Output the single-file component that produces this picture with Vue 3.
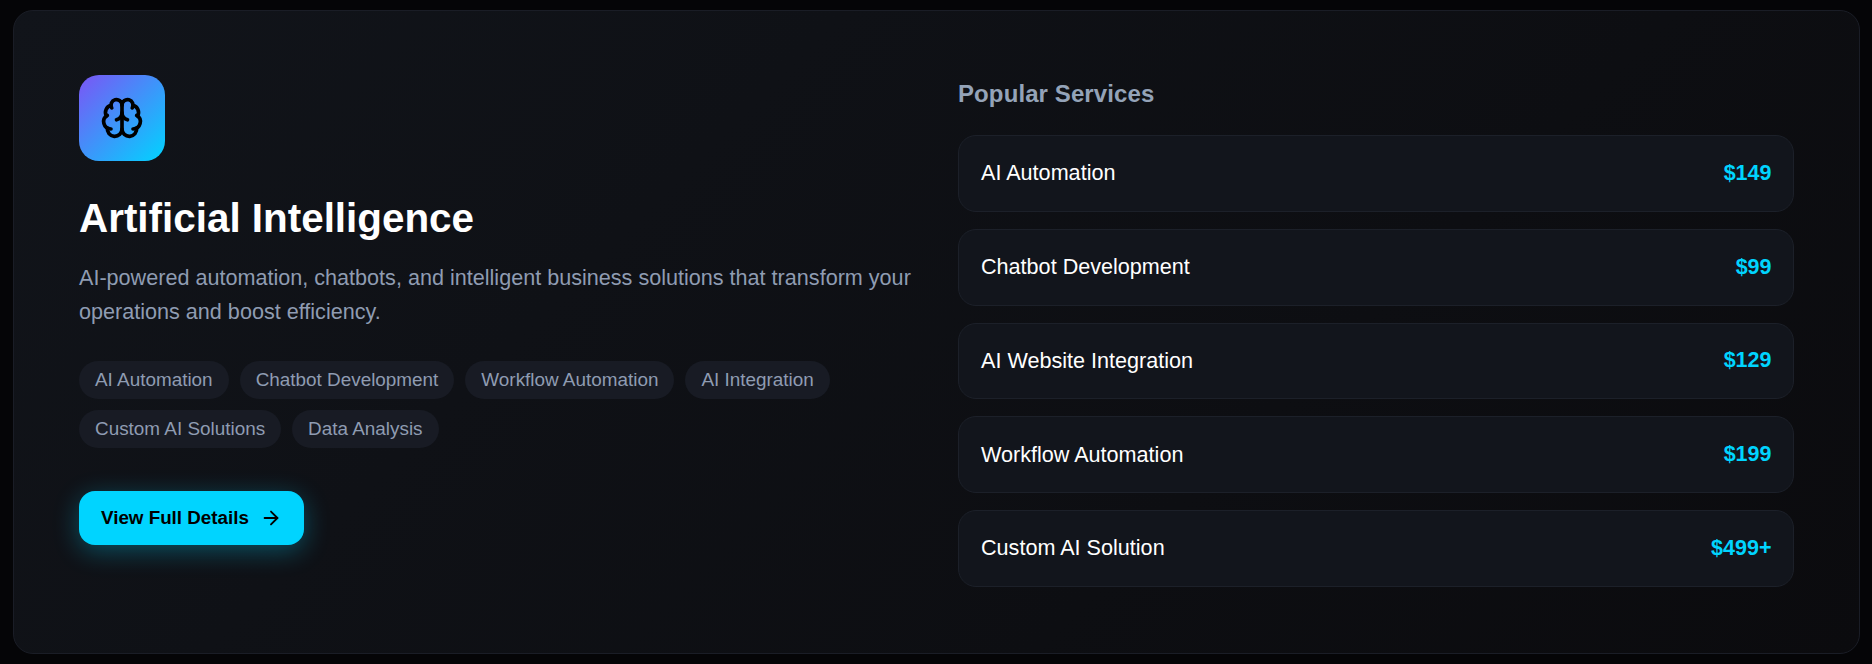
<script setup>
const tags = ['AI Automation', 'Chatbot Development', 'Workflow Automation', 'AI Integration', 'Custom AI Solutions', 'Data Analysis']
const services = [
  { name: 'AI Automation', price: '$149' },
  { name: 'Chatbot Development', price: '$99' },
  { name: 'AI Website Integration', price: '$129' },
  { name: 'Workflow Automation', price: '$199' },
  { name: 'Custom AI Solution', price: '$499+' }
]
</script>

<template>
  <div class="page">
    <section class="card">
      <div class="left">
        <div class="icon">
          <svg width="44" height="44" viewBox="0 0 24 24" fill="none" stroke="#000" stroke-width="2" stroke-linecap="round" stroke-linejoin="round">
            <path d="M12 18V5" />
            <path d="M15 13a4.17 4.17 0 0 1-3-4 4.17 4.17 0 0 1-3 4" />
            <path d="M17.598 6.5A3 3 0 1 0 12 5a3 3 0 1 0-5.598 1.5" />
            <path d="M17.997 5.125a4 4 0 0 1 2.526 5.77" />
            <path d="M18 18a4 4 0 0 0 2-7.464" />
            <path d="M19.967 17.483A4 4 0 1 1 12 18a4 4 0 1 1-7.967-.517" />
            <path d="M6 18a4 4 0 0 1-2-7.464" />
            <path d="M6.003 5.125a4 4 0 0 0-2.526 5.77" />
          </svg>
        </div>
        <h2 class="title">Artificial Intelligence</h2>
        <p class="desc">AI-powered automation, chatbots, and intelligent business solutions that transform your operations and boost efficiency.</p>
        <div class="tags">
          <span v-for="t in tags" :key="t" class="tag">{{ t }}</span>
        </div>
        <button class="cta">
          View Full Details
          <svg width="22" height="22" viewBox="0 0 24 24" fill="none" stroke="#000" stroke-width="2" stroke-linecap="round" stroke-linejoin="round">
            <path d="M5 12h14" />
            <path d="m12 5 7 7-7 7" />
          </svg>
        </button>
      </div>
      <div class="right">
        <h3 class="heading">Popular Services</h3>
        <div class="list">
          <div v-for="s in services" :key="s.name" class="row">
            <span class="name">{{ s.name }}</span>
            <span class="price">{{ s.price }}</span>
          </div>
        </div>
      </div>
    </section>
  </div>
</template>

<style>
html, body { margin: 0; background: #050507; }
</style>

<style scoped>
.page {
  box-sizing: border-box;
  width: 1872px;
  height: 664px;
  padding: 10px 12px 10px 13px;
  background: #050507;
  font-family: "Liberation Sans", Arial, sans-serif;
}
.card {
  box-sizing: border-box;
  height: 644px;
  padding: 64px 65px;
  display: grid;
  grid-template-columns: 1fr 1fr;
  gap: 43px;
  border: 1px solid #1a1d26;
  border-radius: 20px;
  background: linear-gradient(135deg, #11141a 0%, #0b0b0e 100%);
}
.left { min-width: 0; }
.icon {
  width: 86px;
  height: 86px;
  border-radius: 20px;
  display: flex;
  align-items: center;
  justify-content: center;
  background: linear-gradient(135deg, #7b55f5 0%, #00d4ff 100%);
}
.title {
  margin: 33px 0 0;
  font-size: 40.4px;
  line-height: 48px;
  font-weight: 700;
  color: #fff;
}
.desc {
  margin: 19px 0 0;
  font-size: 21.6px;
  line-height: 33.6px;
  color: #8f9cb2;
}
.tags {
  margin-top: 33px;
  display: flex;
  flex-wrap: wrap;
  gap: 11px;
}
.tag {
  padding: 8px 16px;
  border-radius: 20px;
  background: #181b24;
  font-size: 18.9px;
  line-height: 22px;
  color: #8f9cb2;
}
.cta {
  margin-top: 43px;
  height: 54px;
  padding: 0 22px;
  display: inline-flex;
  align-items: center;
  gap: 11px;
  border: 0;
  border-radius: 16px;
  background: #00d4ff;
  box-shadow: 0 6px 26px rgba(0, 212, 255, 0.32);
  font-family: inherit;
  font-size: 18.8px;
  font-weight: 700;
  color: #000;
}
.heading {
  margin: 4px 0 0;
  font-size: 24px;
  line-height: 29px;
  letter-spacing: 0.1px;
  font-weight: 700;
  color: #94a3b8;
}
.list {
  margin-top: 27px;
  display: flex;
  flex-direction: column;
  gap: 17px;
}
.row {
  box-sizing: border-box;
  height: 76.75px;
  padding: 0 21.5px 0 22px;
  display: flex;
  align-items: center;
  justify-content: space-between;
  border: 1px solid #1c2029;
  border-radius: 18px;
  background: #12151c;
}
.name { font-size: 21.6px; color: #fff; }
.price { font-size: 21.5px; font-weight: 700; color: #00d4ff; }
</style>
